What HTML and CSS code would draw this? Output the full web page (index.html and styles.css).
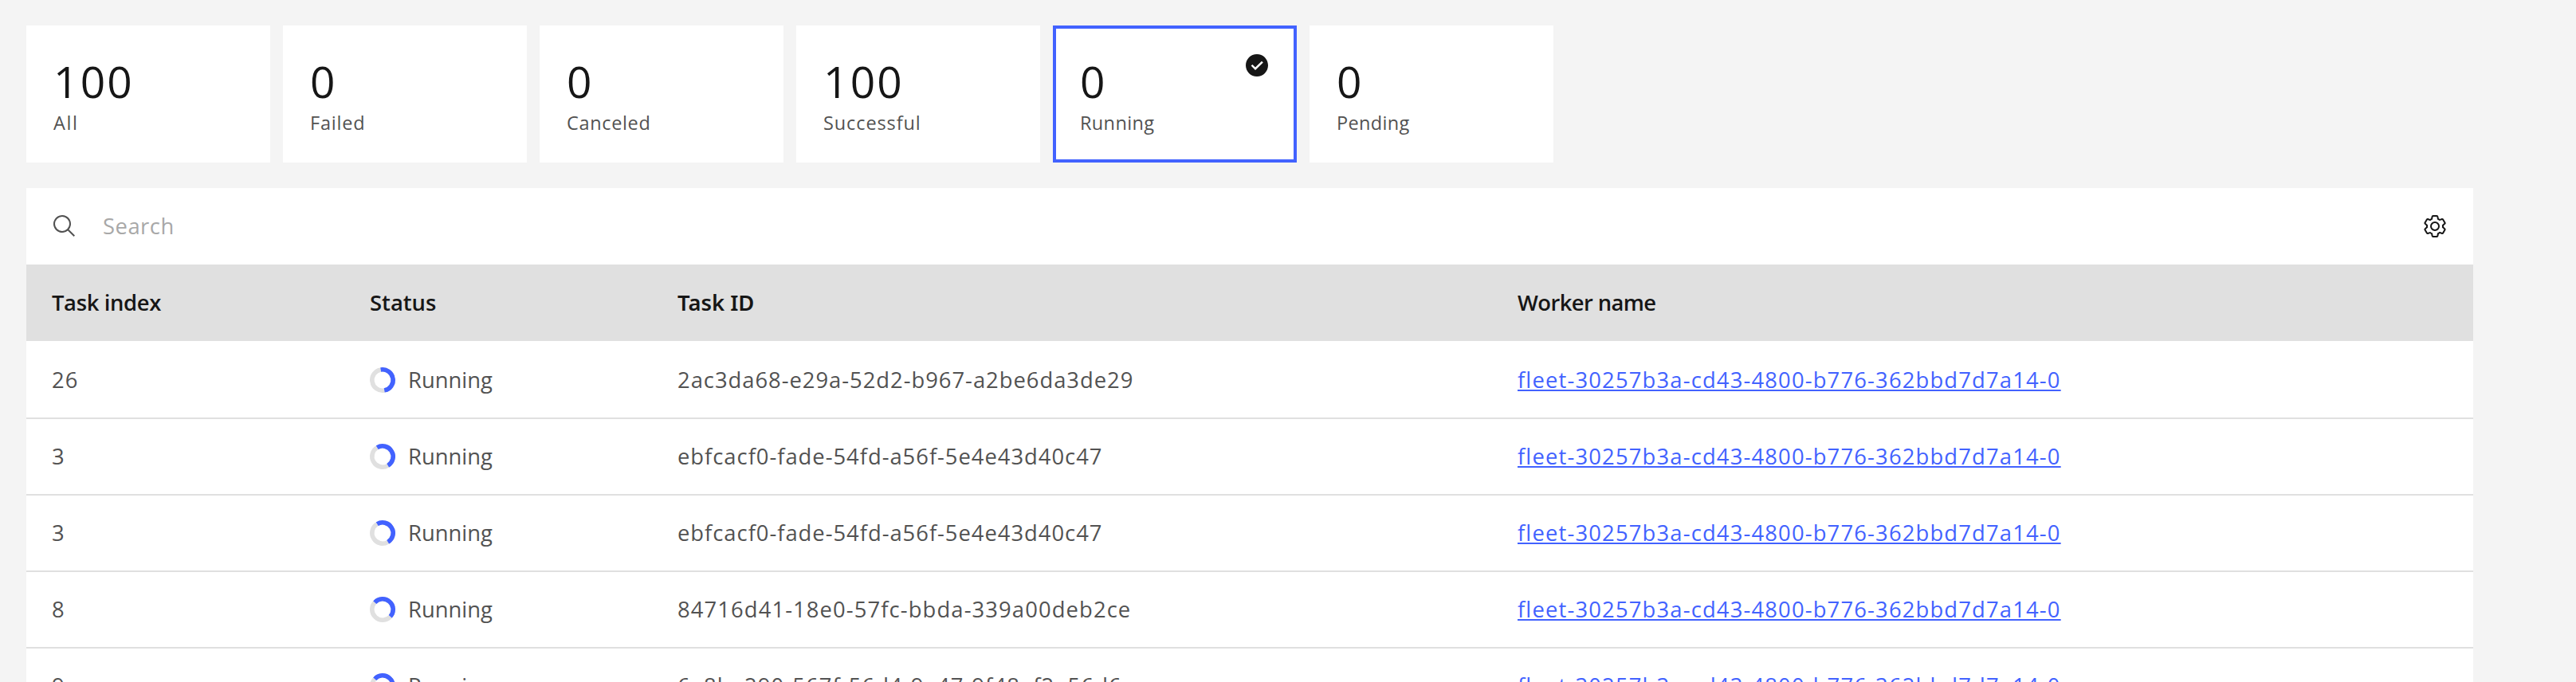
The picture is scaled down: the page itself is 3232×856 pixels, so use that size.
FILE: index.html
```html
<!DOCTYPE html>
<html lang="en">
<head>
<meta charset="utf-8">
<title>Tasks</title>
<link rel="stylesheet" href="styles.css">
</head>
<body>
<svg class="defs" width="0" height="0" aria-hidden="true">
  <symbol id="spinner" viewBox="0 0 32 32">
    <circle cx="16" cy="16" r="13.2" fill="none" stroke="#e0e0e0" stroke-width="5.6"/>
    <path d="M16 2.8a13.2 13.2 0 0 1 0 26.4" fill="none" stroke="#4262ff" stroke-width="5.6"/>
  </symbol>
</svg>
<main class="page">
  <section class="tiles">
    <div class="tile"><div class="count">100</div><div class="label label-all">All</div></div>
    <div class="tile"><div class="count">0</div><div class="label label-failed">Failed</div></div>
    <div class="tile"><div class="count">0</div><div class="label label-canceled">Canceled</div></div>
    <div class="tile"><div class="count">100</div><div class="label label-successful">Successful</div></div>
    <div class="tile selected">
      <div class="count">0</div><div class="label">Running</div>
      <svg class="check" viewBox="0 0 16 16"><path fill="#161616" d="M8,1C4.1,1,1,4.1,1,8c0,3.9,3.1,7,7,7s7-3.1,7-7C15,4.1,11.9,1,8,1z M7,11L4.3,8.3l0.9-0.8L7,9.3l4-3.9l0.9,0.8L7,11z"/></svg>
    </div>
    <div class="tile"><div class="count">0</div><div class="label">Pending</div></div>
  </section>
  <section class="panel">
    <div class="toolbar">
      <svg class="icon" viewBox="0 0 32 32"><path fill="#525252" d="M29,27.5859l-7.5521-7.5521a11.0177,11.0177,0,1,0-1.4141,1.4141L27.5859,29ZM4,13a9,9,0,1,1,9,9A9.01,9.01,0,0,1,4,13Z"/></svg>
      <span class="search">Search</span>
      <svg class="icon" viewBox="0 0 32 32"><path fill="#161616" d="M27,16.76c0-.25,0-.5,0-.76s0-.51,0-.77l1.92-1.68A2,2,0,0,0,29.3,11L26.94,7a2,2,0,0,0-1.73-1,2,2,0,0,0-.64.1l-2.43.82a11.35,11.35,0,0,0-1.31-.75l-.51-2.52a2,2,0,0,0-2-1.61H13.64a2,2,0,0,0-2,1.61l-.51,2.52a11.48,11.48,0,0,0-1.32.75L7.43,6.06A2,2,0,0,0,6.79,6,2,2,0,0,0,5.06,7L2.7,11a2,2,0,0,0,.41,2.51L5,15.24c0,.25,0,.5,0,.76s0,.51,0,.77L3.11,18.45A2,2,0,0,0,2.7,21L5.06,25a2,2,0,0,0,1.73,1,2,2,0,0,0,.64-.1l2.43-.82a11.35,11.35,0,0,0,1.31.75l.51,2.52a2,2,0,0,0,2,1.61h4.72a2,2,0,0,0,2-1.61l.51-2.52a11.48,11.48,0,0,0,1.32-.75l2.42.82a2,2,0,0,0,.64.1,2,2,0,0,0,1.73-1L29.3,21a2,2,0,0,0-.41-2.51ZM25.21,24l-3.43-1.16a8.86,8.86,0,0,1-2.71,1.57L18.36,28H13.64l-.71-3.55a9.36,9.36,0,0,1-2.7-1.57L6.79,24,4.43,20l2.72-2.4a8.9,8.9,0,0,1,0-3.13L4.43,12,6.79,8l3.43,1.16a8.86,8.86,0,0,1,2.71-1.57L13.64,4h4.72l.71,3.55a9.36,9.36,0,0,1,2.7,1.57L25.21,8,27.57,12l-2.72,2.4a8.9,8.9,0,0,1,0,3.13L27.57,20Z"/><path fill="#161616" d="M16,22a6,6,0,1,1,6-6A5.94,5.94,0,0,1,16,22Zm0-10a3.91,3.91,0,0,0-4,4,3.91,3.91,0,0,0,4,4,3.91,3.91,0,0,0,4-4A3.91,3.91,0,0,0,16,12Z"/></svg>
    </div>
    <div class="grid head">
      <span class="h-index">Task index</span><span>Status</span><span class="h-id">Task ID</span><span class="h-worker">Worker name</span>
    </div>
    <div class="rows">
      <div class="grid row">
        <span class="index">26</span>
        <div class="status"><svg class="spinner turn-10"><use href="#spinner"/></svg><span>Running</span></div>
        <span class="id">2ac3da68-e29a-52d2-b967-a2be6da3de29</span>
        <a class="worker">fleet-30257b3a-cd43-4800-b776-362bbd7d7a14-0</a>
      </div>
      <div class="grid row">
        <span class="index">3</span>
        <div class="status"><svg class="spinner turn-30"><use href="#spinner"/></svg><span>Running</span></div>
        <span class="id">ebfcacf0-fade-54fd-a56f-5e4e43d40c47</span>
        <a class="worker">fleet-30257b3a-cd43-4800-b776-362bbd7d7a14-0</a>
      </div>
      <div class="grid row">
        <span class="index">3</span>
        <div class="status"><svg class="spinner turn-30"><use href="#spinner"/></svg><span>Running</span></div>
        <span class="id">ebfcacf0-fade-54fd-a56f-5e4e43d40c47</span>
        <a class="worker">fleet-30257b3a-cd43-4800-b776-362bbd7d7a14-0</a>
      </div>
      <div class="grid row">
        <span class="index">8</span>
        <div class="status"><svg class="spinner turn-48"><use href="#spinner"/></svg><span>Running</span></div>
        <span class="id id-wide">84716d41-18e0-57fc-bbda-339a00deb2ce</span>
        <a class="worker">fleet-30257b3a-cd43-4800-b776-362bbd7d7a14-0</a>
      </div>
      <div class="grid row">
        <span class="index">9</span>
        <div class="status"><svg class="spinner turn-48"><use href="#spinner"/></svg><span>Running</span></div>
        <span class="id id-wide">6a8ba290-567f-56d4-9a47-9f48af2a56d6</span>
        <a class="worker">fleet-30257b3a-cd43-4800-b776-362bbd7d7a14-0</a>
      </div>
    </div>
  </section>
</main>
</body>
</html>
```
FILE: styles.css
```css
* { box-sizing: border-box; }

body {
  margin: 0;
  height: 856px;
  overflow: hidden;
  background: #f4f4f4;
  color: #525252;
  font-family: "Open Sans", "Noto Sans", sans-serif;
  font-size: 27.4px;
}

.defs { position: absolute; }

.page {
  height: 856px;
  overflow: hidden;
  padding: 32px 129px 0 33px;
}

.tiles { display: flex; gap: 16px; margin-bottom: 32px; }

.tile {
  position: relative;
  width: 306px;
  height: 172px;
  padding: 35px 32px 0 34px;
  background: #fff;
  white-space: nowrap;
}

.selected { box-shadow: inset 0 0 0 4px #4262ff; }

.check {
  position: absolute;
  top: 34px;
  right: 34px;
  width: 32px;
  height: 32px;
}

.count {
  color: #161616;
  font-size: 55px;
  line-height: 70px;
  letter-spacing: 2.2px;
}

.label { font-size: 23.5px; line-height: 34px; letter-spacing: .35px; }
.label-all { letter-spacing: 1.6px; }
.label-failed { letter-spacing: .8px; }
.label-canceled { letter-spacing: .65px; }
.label-successful { letter-spacing: .9px; }

.panel { background: #fff; }

.toolbar {
  display: flex;
  align-items: center;
  height: 96px;
  padding: 0 32px;
}

.icon { width: 32px; height: 32px; flex: none; }

.search {
  flex: 1;
  padding: 0 0 2px 32px;
  color: #a8a8a8;
  letter-spacing: .5px;
}

.grid {
  display: grid;
  grid-template-columns: 399px 386px 1054px 1fr;
  align-items: center;
  padding-left: 32px;
  white-space: nowrap;
}

.head {
  height: 96px;
  padding-bottom: 2px;
  background: #e0e0e0;
  color: #161616;
  font-weight: 600;
}

.h-index { letter-spacing: -.35px; }
.h-worker { letter-spacing: -.6px; }
.h-id { font-family: "Noto Sans", sans-serif; }

.rows { padding-top: 2px; }
.row { height: 96px; border-bottom: 2px solid #e0e0e0; }

.status { display: flex; align-items: center; gap: 16px; }
.spinner { width: 32px; height: 32px; }
.turn-10 { transform: rotate(-10deg); }
.turn-30 { transform: rotate(-31deg); }
.turn-48 { transform: rotate(-48deg); }

.index, .id, .worker, .status span { padding-bottom: 2px; }
.index { letter-spacing: 1.2px; }
.id { letter-spacing: .97px; }
.id-wide { letter-spacing: 1.1px; }

.worker {
  justify-self: start;
  color: #4262ff;
  letter-spacing: 1.16px;
  text-decoration: underline;
  text-decoration-thickness: 2px;
  text-underline-offset: 2px;
  text-decoration-skip-ink: none;
}
```
